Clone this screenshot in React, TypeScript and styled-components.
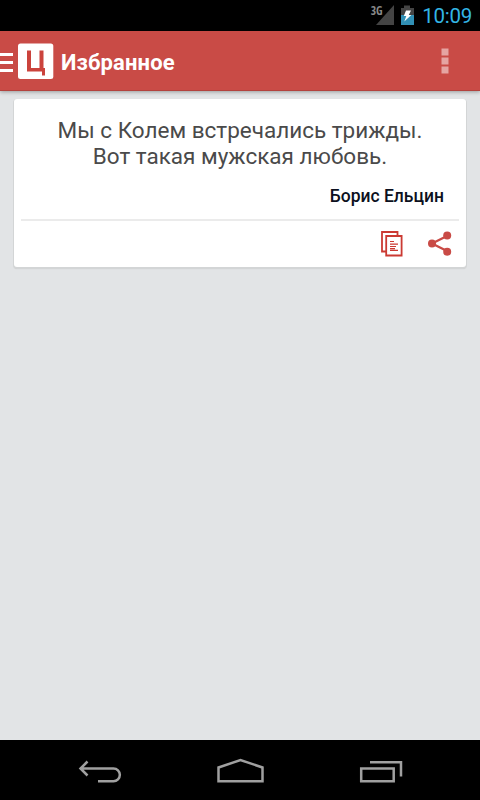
import React from 'react';
import styled, { createGlobalStyle } from 'styled-components';

const GlobalStyle = createGlobalStyle`
  * { box-sizing: border-box; }
  body { margin: 0; background: #e2e4e6; font-family: Roboto, "Noto Sans", sans-serif; }
  svg { display: block; flex: none; }
`;

const Screen = styled.div`
  width: 480px;
  height: 800px;
  display: flex;
  flex-direction: column;
  overflow: hidden;
  background: #e2e4e6;
`;

const StatusBar = styled.div`
  height: 31px;
  flex: none;
  display: flex;
  justify-content: flex-end;
  padding-right: 8px;
  background: #000;
`;

const Clock = styled.time`
  margin-left: 8px;
  font-size: 20.5px;
  line-height: 32px;
  letter-spacing: -0.25px;
  color: #33b5e5;
  white-space: nowrap;
`;

const Network = styled.span`
  margin: 4px -6px 0 0;
  font-family: "Open Sans", sans-serif;
  font-size: 11.5px;
  line-height: 14px;
  font-weight: 700;
  font-stretch: 75%;
  letter-spacing: -0.3px;
  color: #888;
`;

const ActionBar = styled.header`
  position: relative;
  height: 60px;
  flex: none;
  display: flex;
  align-items: center;
  background: #c94b46;
  border-bottom: 1px solid #b3423e;
  box-shadow: 0 1px 4px rgba(0, 0, 0, 0.32);
`;

const Title = styled.h1`
  margin: 5px 0 0 7px;
  flex: 1;
  font-size: 22px;
  line-height: 28px;
  font-weight: 700;
  letter-spacing: 0.15px;
  color: #fff;
`;

const Overflow = styled.button`
  width: 70px;
  height: 60px;
  padding: 1px 0 0;
  border: 0;
  background: none;
  display: flex;
  justify-content: center;
  align-items: center;
`;

const Content = styled.main`
  flex: 1;
  padding: 8px 14px;
`;

const Card = styled.article`
  height: 168px;
  padding: 0 7px;
  background: #fff;
  border-radius: 3px;
  box-shadow: 0 1px 0 1px #d3d5d6, 0 2px 1px #c6c8c9;
`;

const Quote = styled.p`
  margin: 0;
  padding-top: 18px;
  height: 82px;
  font-size: 22.5px;
  line-height: 26px;
  font-weight: 400;
  text-align: center;
  color: #4a4a4a;
  white-space: nowrap;
`;

const Author = styled.p`
  margin: 0;
  height: 38px;
  padding: 3px 15px 0 0;
  font-size: 17.5px;
  line-height: 24px;
  font-weight: 500;
  text-align: right;
  color: #0c1020;
`;

const Actions = styled.footer`
  display: flex;
  justify-content: flex-end;
  gap: 25px;
  padding: 10px 7px 0 0;
  border-top: 2px solid #ebebeb;
`;

const NavBar = styled.nav`
  height: 60px;
  flex: none;
  display: flex;
  justify-content: space-between;
  align-items: center;
  padding: 2px 77px 0 78px;
  background: #000;
`;

export default function App() {
  return (
    <>
      <GlobalStyle />
      <Screen>
        <StatusBar>
          <Network>3G</Network>
          <svg width="18" height="31">
            <path d="M18 5V25H0Z" fill="#444" />
          </svg>
          <svg width="20" height="31">
            <path d="M7 8h3V5.500h6V8h4v7H7Z" fill="#444" />
            <path d="M7 15h13v10H7Z" fill="#3190b5" />
            <path d="M12 10.500h5l-2.200 4.500h2.500l-7 6.500 2-5.500h-2.500Z" fill="#fff" />
          </svg>
          <Clock>10:09</Clock>
        </StatusBar>
        <ActionBar>
          <svg width="54" height="60">
            <path d="M0 23.400h13M0 31.400h13M0 39.400h13" stroke="#fff" strokeWidth="3" />
            <rect x="18" y="12.500" width="35.300" height="35.500" rx="2.500" fill="#fff" />
            <path d="M27 19.500h4v17.500h8.500v-17.500H43.500v17.500H45v7.500h-3v-4H27Z" fill="#cb433c" />
          </svg>
          <Title>Избранное</Title>
          <Overflow aria-label="Меню">
            <svg width="8" height="26" fill="#e5a4a2">
              <path d="M.5 .5h7v7h-7zM.5 9.500h7v7h-7zM.5 18.500h7v7h-7z" />
            </svg>
          </Overflow>
        </ActionBar>
        <Content>
          <Card>
            <Quote>
              Мы с Колем встречались трижды.
              <br />
              Вот такая мужская любовь.
            </Quote>
            <Author>Борис Ельцин</Author>
            <Actions>
              <svg width="22" height="26" fill="none" stroke="#cb3a33" strokeWidth="1.800">
                <path d="M4.500 20.500H1V1H16.500v3M5.200 5h15.400v19.500H5.200Z" />
                <path d="M9 10.500h4M9 13.200h8M9 15.500h6M9 17.700h5M9 19.300h8" strokeWidth="1.200" />
              </svg>
              <svg width="24" height="26" fill="#c94b46">
                <path d="M20 4.500L4 12.500l16 8" fill="none" stroke="#c94b46" strokeWidth="2.300" />
                <circle cx="19.200" cy="4.500" r="4" />
                <circle cx="4" cy="12.500" r="4" />
                <circle cx="19.200" cy="20.700" r="4" />
              </svg>
            </Actions>
          </Card>
        </Content>
        <NavBar>
          <svg width="44" height="26" fill="none" stroke="#a0a0a0" strokeWidth="2.500">
            <path d="M9.500 3.500L2.500 10.500L9.500 17.500M2.500 10.500H35.500a6.300 6.300 0 0 1 0 12.700H20" />
          </svg>
          <svg width="48" height="26" fill="none" stroke="#a0a0a0" strokeWidth="2.500">
            <path d="M1.500 9.500L23.500 2l22 7.500v13.700H1.500Z" />
          </svg>
          <svg width="44" height="26" fill="none" stroke="#a0a0a0" strokeWidth="2.500">
            <path d="M2.200 10.500h32.500v12.700h-32.500ZM11 4.300h31V18.500" />
          </svg>
        </NavBar>
      </Screen>
    </>
  );
}
